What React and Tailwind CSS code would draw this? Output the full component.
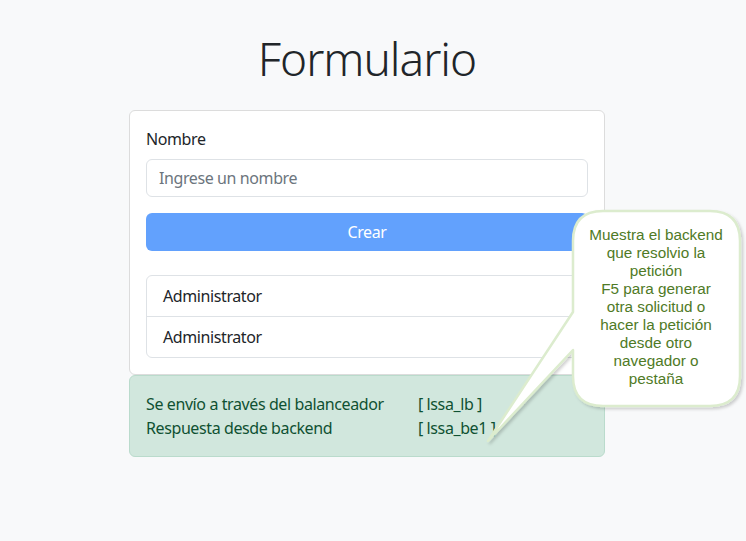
const items = ["Administrator", "Administrator"];

const calloutLines = [
  "Muestra el backend",
  "que resolvio la",
  "petición",
  "F5 para generar",
  "otra solicitud o",
  "hacer la petición",
  "desde otro",
  "navegador o",
  "pestaña",
];

function Callout() {
  return (
    <>
      <svg
        className="absolute left-0 top-0 pointer-events-none"
        width="746"
        height="541"
        viewBox="0 0 746 541"
      >
        <defs>
          <filter id="sh" x="-10%" y="-10%" width="130%" height="130%">
            <feDropShadow dx="2" dy="2" stdDeviation="1.5" floodColor="#000" floodOpacity="0.18" />
          </filter>
        </defs>
        <path
          d="M603 211 H710 Q740 211 740 241 V376 Q740 406 710 406 H603 Q573 406 573 376 V350 L488 441 L573 312 V241 Q573 211 603 211 Z"
          fill="#ffffff"
          stroke="#dcecce"
          strokeWidth="2.5"
          strokeLinejoin="round"
          filter="url(#sh)"
        />
      </svg>
      <div className="absolute left-[573px] top-[226px] w-[166px] text-center text-[15.3px] leading-[18px] tracking-normal text-[#4f7a26] font-['Liberation_Sans',Arial,sans-serif]">
        {calloutLines.map((line, i) => (
          <div key={i}>{line}</div>
        ))}
      </div>
    </>
  );
}

export default function App() {
  return (
    <div className="relative min-h-[541px] w-[746px] bg-[#f8f9fa] text-[#212529] font-['Noto_Sans',sans-serif] text-base tracking-[-0.4px] overflow-hidden">
      <div className="flex flex-col items-center pr-[12px] pt-[30px]">
        <h1 className="text-[46px] font-light leading-[56px] tracking-[-1px] mb-[24px]">Formulario</h1>

        <div className="w-[476px]">
          <div className="bg-white border border-[#dcdcdc] rounded-md p-4">
            <label className="block leading-6 mb-2">Nombre</label>
            <input
              className="block w-full h-[38px] px-3 border border-[#dee2e6] rounded-md outline-none placeholder:text-[#6c757d]"
              placeholder="Ingrese un nombre"
            />
            <button className="mt-4 w-full h-[38px] rounded-md bg-[#62a1fd] text-white">
              Crear
            </button>
            <ul className="mt-6 border border-[#dee2e6] rounded-md">
              {items.map((name, i) => (
                <li
                  key={i}
                  className={`px-4 py-2 leading-6 ${i > 0 ? "border-t border-[#dee2e6]" : ""}`}
                >
                  {name}
                </li>
              ))}
            </ul>
          </div>

          <div className="bg-[#d1e7dd] border border-[#badbcc] rounded-md p-4 text-[#0f5132] leading-6">
            <div className="flex">
              <span className="w-[272px]">Se envío a través del balanceador</span>
              <span>[ lssa_lb ]</span>
            </div>
            <div className="flex">
              <span className="w-[272px]">Respuesta desde backend</span>
              <span>[ lssa_be1 ]</span>
            </div>
          </div>
        </div>
      </div>
      <Callout />
    </div>
  );
}
